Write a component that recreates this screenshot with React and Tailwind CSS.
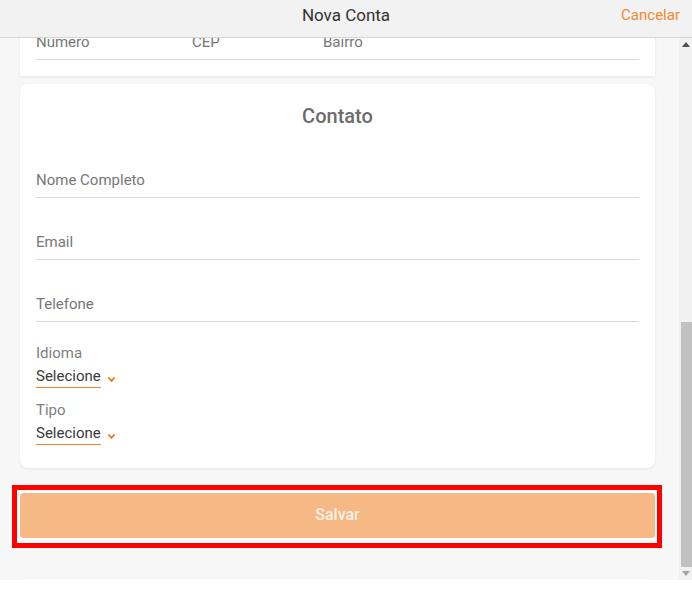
import { useLayoutEffect, useRef } from 'react';

const font = { fontFamily: 'Roboto, "Noto Sans", sans-serif' };

function Field({ label, className = '' }) {
  return (
    <div className={'border-b border-[#d9d9d9] pb-[7px] ' + className}>
      <div className="text-[15px] leading-5 text-[#777]">{label}</div>
    </div>
  );
}

function Chevron() {
  return (
    <svg width="7" height="5" viewBox="0 0 7 5" className="ml-[7px] mt-[4px]">
      <polyline points="1,1 3.5,4 6,1" fill="none" stroke="#f07a1a" strokeWidth="1.9" strokeLinecap="round" strokeLinejoin="round" />
    </svg>
  );
}

function SelectField({ label, className = '' }) {
  return (
    <div className={className}>
      <div className="text-[15px] leading-5 text-[#808080]">{label}</div>
      <div className="mt-[3px] flex items-center">
        <span className="border-b border-[#f0832c] pb-px text-[15px] leading-5 text-[#3a3a3a]">Selecione</span>
        <Chevron />
      </div>
    </div>
  );
}

function Card({ children, className = '' }) {
  return (
    <div className={'rounded-lg bg-white px-4 shadow-[0_1px_3px_rgba(0,0,0,0.08)] ' + className}>
      {children}
    </div>
  );
}

function Title({ children }) {
  return <h2 className="text-center text-[20px] font-medium leading-7 text-[#6b6b6b]">{children}</h2>;
}

export default function App() {
  const scrollRef = useRef(null);
  const contatoRef = useRef(null);

  useLayoutEffect(() => {
    // keep the Contato card just under the header, like the screenshot
    if (scrollRef.current && contatoRef.current) {
      scrollRef.current.scrollTop = contatoRef.current.offsetTop - 46;
    }
  }, []);

  return (
    <div className="h-[610px] w-full bg-white" style={font}>
      <header className="grid h-[38px] grid-cols-[1fr_auto_1fr] items-center border-b border-[#d6d6d6] bg-[#f2f2f2] pb-[6px]">
        <span />
        <span className="text-[17px] text-[#333]">Nova Conta</span>
        <button className="justify-self-end pr-3 text-[15px] text-[#f28a30]">Cancelar</button>
      </header>

      <div className="flex h-[542px]">
        <div ref={scrollRef} className="relative flex-1 overflow-y-auto bg-[#f7f7f7] pl-5 pr-6 [scrollbar-width:none]">
          <div className="pt-4">
            <Card className="rounded-b-none pb-4 pt-[18px]">
              <Title>Endereço</Title>
              <Field label="Logradouro" className="mt-10" />
              <div className="mt-[34px] flex border-b border-[#d9d9d9] pb-[7px] text-[15px] leading-5 text-[#777]">
                <div className="w-[156px]">Numero</div>
                <div className="w-[131px]">CEP</div>
                <div className="flex-1">Bairro</div>
              </div>
            </Card>

            <div ref={contatoRef} className="mt-2">
              <Card className="pb-[23px] pt-[18px]">
                <Title>Contato</Title>
                <Field label="Nome Completo" className="mt-10" />
                <Field label="Email" className="mt-[34px]" />
                <Field label="Telefone" className="mt-[34px]" />
                <SelectField label="Idioma" className="mt-[21px]" />
                <SelectField label="Tipo" className="mt-3" />
              </Card>
            </div>

            <div className="-ml-2 -mr-[7px] mt-[17px] border-[5px] border-[#ff0000] bg-white pb-[5px] pl-[3px] pr-[2px] pt-[3px]">
              <button className="flex h-[45px] w-full items-center justify-center rounded bg-[#f6b884] pb-px text-[16px] font-medium text-[#fdf1e7]">
                Salvar
              </button>
            </div>

            <Card className="mt-[31px] pb-4 pt-[18px]">
              <Title>Observações</Title>
              <Field label="Comentários" className="mt-10" />
            </Card>
            <div className="h-10" />
          </div>
        </div>

        <div className="flex w-[13px] flex-col bg-[#f1f1f1]">
          <div className="flex h-[13px] items-center justify-center pl-px">
            <svg width="8" height="5" viewBox="0 0 8 5"><polygon points="0,5 4,0 8,5" fill="#505050" /></svg>
          </div>
          <div className="flex-1" />
          <div className="ml-[2px] h-[245px] bg-[#c1c1c1]" />
          <div className="flex h-[13px] items-center justify-center pl-px">
            <svg width="8" height="5" viewBox="0 0 8 5"><polygon points="0,0 8,0 4,5" fill="#a3a3a3" /></svg>
          </div>
        </div>
      </div>
    </div>
  );
}
